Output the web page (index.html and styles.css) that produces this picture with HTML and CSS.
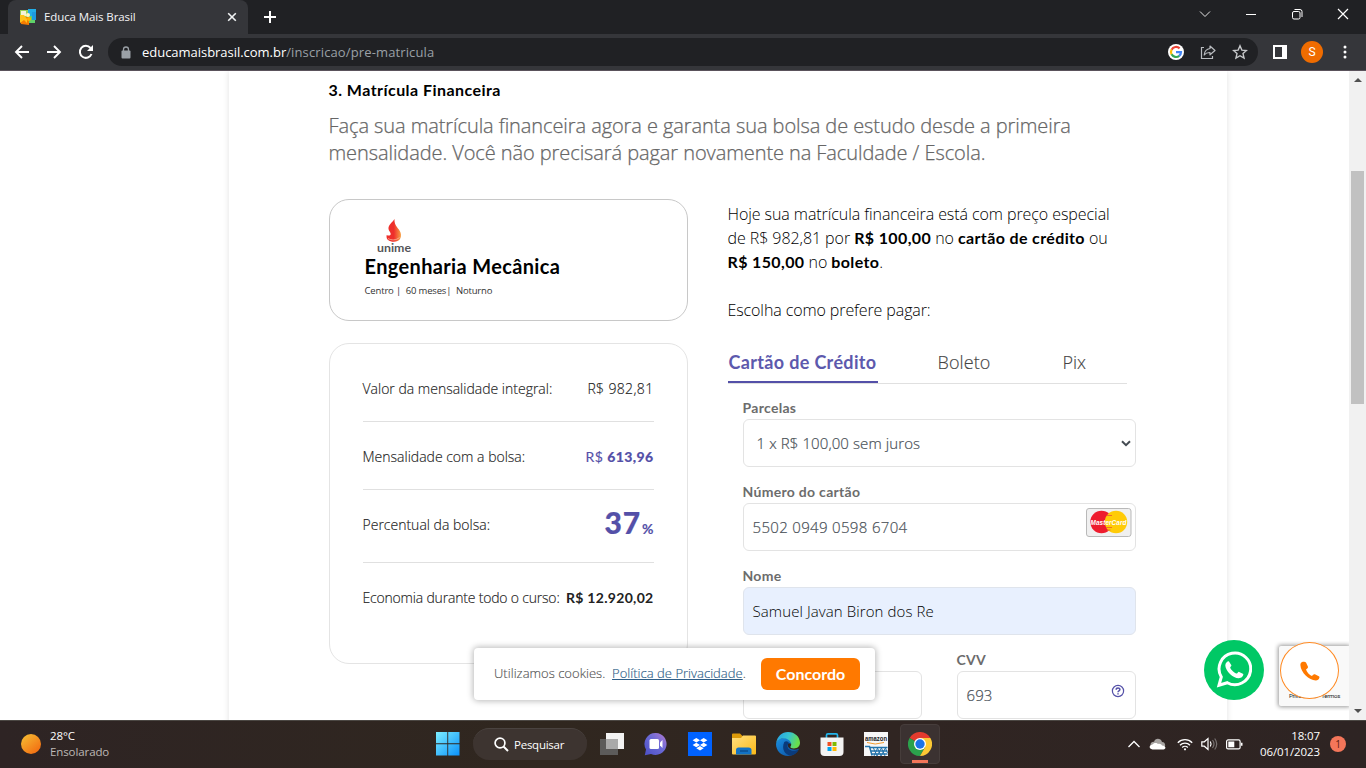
FILE: index.html
```
<!DOCTYPE html>
<html lang="pt-BR">
<head>
<meta charset="utf-8">
<title>Educa Mais Brasil</title>
<link rel="stylesheet" href="styles.css">
</head>
<body>
<header class="tabstrip">
  <div class="tab">
    <svg class="favicon" width="16" height="16" viewBox="0 0 16 16"><path fill="#9bd05a" d="M0 1h8v7H0z"/><path fill="#f4f4d8" d="M1 2h5v5H1z"/><path fill="#22aee8" d="M8 0h8v8H8z"/><path fill="#5ed36a" d="M9 7h6v7H9z"/><path fill="#1d9be0" d="M12 3h4v8h-4z"/><path fill="#f57c00" d="M0 8h9v8l-8-1z"/><path fill="#ffc21a" d="M0 6h4l3 4v4l-3-3-4 3z"/><circle cx="8" cy="6" r="2" fill="#fff6c0"/><circle cx="9" cy="10" r="2" fill="#ffb300"/></svg>
    <span class="tab-title">Educa Mais Brasil</span>
    <svg class="tab-close" width="10" height="10" viewBox="0 0 10 10"><path d="M1.200 1.200l7.600 7.600M8.800 1.200L1.200 8.800" stroke="#f1f3f4" stroke-width="1.600"/></svg>
  </div>
  <svg class="newtab" width="12" height="12" viewBox="0 0 12 12"><path d="M6 0v12M0 6h12" stroke="#fff" stroke-width="2"/></svg>
  <div class="winbtns">
    <svg width="12" height="12" viewBox="0 0 12 12"><path d="M1 3.500l5 5 5-5" fill="none" stroke="#e4e4e4"/></svg>
    <svg width="12" height="12" viewBox="0 0 12 12"><path d="M1 6.500h10" stroke="#fff"/></svg>
    <svg width="12" height="12" viewBox="0 0 12 12" fill="none" stroke="#fff"><rect x="1.500" y="3.500" width="7.500" height="7.500" rx="1.500"/><path d="M3.500 1.500H9a2 2 0 0 1 2 2V9"/></svg>
    <svg width="12" height="12" viewBox="0 0 12 12"><path d="M1 1l10 10M11 1L1 11" stroke="#fff" stroke-width="1.200"/></svg>
  </div>
</header>
<nav class="toolbar">
  <div class="nav-icons">
    <svg width="16" height="16" viewBox="0 0 16 16"><path d="M15 8H2M8 2L2 8l6 6" fill="none" stroke="#fff" stroke-width="1.900"/></svg>
    <svg width="16" height="16" viewBox="0 0 16 16"><path d="M1 8h13M8 2l6 6-6 6" fill="none" stroke="#fff" stroke-width="1.900"/></svg>
    <svg width="16" height="16" viewBox="0 0 16 16"><path d="M13.500 10A6 6 0 1 1 12.500 4" fill="none" stroke="#fff" stroke-width="2"/><path d="M15 1v6H9z" fill="#fff"/></svg>
  </div>
  <div class="omnibox">
    <svg width="10" height="13" viewBox="0 0 10 13"><rect x=".5" y="4.500" width="9" height="8" rx="1" fill="#9aa0a6"/><path d="M2.500 5V3.500a2.500 2.500 0 0 1 5 0V5" fill="none" stroke="#9aa0a6" stroke-width="1.300"/></svg>
    <span class="url"><b>educamaisbrasil.com.br</b>/inscricao/pre-matricula</span>
    <div class="omni-actions">
      <svg width="16" height="16" viewBox="0 0 16 16"><circle cx="8" cy="8" r="8" fill="#fff"/><g fill="none" stroke-width="2.200"><path d="M11.600 4.400A5 5 0 0 0 3.600 5.700" stroke="#ea4335"/><path d="M3.600 5.600a5 5 0 0 0 0 4.900" stroke="#fbbc05"/><path d="M3.600 10.300a5 5 0 0 0 7.700 1.500" stroke="#34a853"/><path d="M11.200 11.900a5 5 0 0 0 1.800-3.700H8" stroke="#4285f4"/></g></svg>
      <svg width="16" height="16" viewBox="0 0 16 16" fill="none" stroke="#b9bcc0" stroke-width="1.200"><path d="M4 3.500H1.500v11h11V12"/><path d="M10 2l5 4.500-5 4.300V8.500C7.500 8.400 5.500 9.300 4.200 11 4.500 7.500 6.500 5 10 4.500z" stroke-linejoin="round"/></svg>
      <svg width="16" height="16" viewBox="0 0 16 16"><path d="M8 1.800l1.850 4.300 4.650.4-3.500 3.100 1.050 4.550L8 11.700l-4.050 2.450L5 9.600 1.500 6.500l4.650-.4z" fill="none" stroke="#c6c8ca" stroke-width="1.400"/></svg>
    </div>
  </div>
  <svg class="panel" width="14" height="14" viewBox="0 0 14 14"><path d="M1 1h12v12H1z" fill="none" stroke="#fff" stroke-width="2"/><path fill="#fff" d="M9 1h4v12H9z"/></svg>
  <span class="avatar">S</span>
  <svg class="dots" width="4" height="14" viewBox="0 0 4 14" fill="#fff"><circle cx="2" cy="2" r="1.500"/><circle cx="2" cy="7" r="1.500"/><circle cx="2" cy="12" r="1.500"/></svg>
</nav>

<div class="viewport">
  <main class="page">
    <h1 class="step">3. Matrícula Financeira</h1>
    <p class="lead">Faça sua matrícula financeira agora e garanta sua bolsa de estudo desde a primeira<br>mensalidade. Você não precisará pagar novamente na Faculdade / Escola.</p>
    <div class="columns">
      <div class="left">
        <section class="course">
          <svg class="unime" width="38" height="36" viewBox="0 0 38 36"><defs><linearGradient id="fl" x1="0" x2="1"><stop offset=".5" stop-color="#ee2f2b"/><stop offset="1" stop-color="#f7a145"/></linearGradient></defs><path d="M18.500 1c-1.500 3-6.500 5.500-6 10 .3 2.200 2.500 3.500 2.200 5.300-.3 1.600-2.700 1.600-4 .6-1 4.500 2.300 6.800 7.300 6.800 5.500 0 8-4 6.600-9C23.500 10.500 18 8.500 18.500 1z" fill="url(#fl)"/><path d="M12 20.500c3.500 2 8 2 11.500-1" fill="none" stroke="#fbb9a0" stroke-width=".8"/><text x="1" y="33.500" class="unime-name" textLength="34" lengthAdjust="spacingAndGlyphs">unime</text></svg>
          <h2 class="course-name">Engenharia Mecânica</h2>
          <p class="course-meta">Centro |&nbsp; 60 meses|&nbsp; Noturno</p>
        </section>
        <section class="values">
          <div class="row"><span>Valor da mensalidade integral:</span><span class="plain">R$ 982,81</span></div>
          <div class="row"><span>Mensalidade com a bolsa:</span><span class="price">R$ <b>613,96</b></span></div>
          <div class="row row-pct"><span>Percentual da bolsa:</span><span class="pct">37<small>%</small></span></div>
          <div class="row"><span class="tight">Economia durante todo o curso:</span><b class="total">R$ 12.920,02</b></div>
        </section>
      </div>
      <div class="right">
        <p class="offer">Hoje sua matrícula financeira está com preço especial<br>de R$ 982,81 por <b>R$ 100,00</b> no <b>cartão de crédito</b> ou<br><b>R$ 150,00</b> no <b>boleto</b>.</p>
        <p class="offer choose">Escolha como prefere pagar:</p>
        <div class="paytabs"><span class="paytab active">Cartão de Crédito</span><span class="paytab boleto">Boleto</span><span class="paytab pix">Pix</span></div>
        <form class="form">
          <div class="field"><label>Parcelas</label><div class="input select"><span>1 x R$ 100,00 sem juros</span><svg width="10" height="7" viewBox="0 0 10 7"><path d="M1 1.200l4 4 4-4" fill="none" stroke="#444b52" stroke-width="2"/></svg></div></div>
          <div class="field"><label>Número do cartão</label><div class="input card"><span class="num">5502 0949 0598 6704</span>
            <svg class="mc" width="46" height="30" viewBox="0 0 46 30"><rect x=".5" y=".5" width="44.500" height="28" rx="2.500" fill="#f0f0f0" stroke="#b9b9b9"/><circle cx="15.500" cy="14" r="11.200" fill="#ee1c2e"/><circle cx="30" cy="14" r="11.200" fill="#ffcb08"/><path d="M21 7.500h5M20 19.500h6M21 22h3.500" stroke="#f0702a" stroke-width="1.200"/><text x="4.500" y="17.200" class="mc-name" textLength="36" lengthAdjust="spacingAndGlyphs">MasterCard</text></svg></div></div>
          <div class="field"><label>Nome</label><div class="input autofill">Samuel Javan Biron dos Re</div></div>
          <div class="pair">
            <div class="field"><label>&nbsp;</label><div class="input"></div></div>
            <div class="field"><label class="cvv">CVV</label><div class="input help"><span>693</span><svg width="14" height="14" viewBox="0 0 14 14" fill="none" stroke="#5450a8"><circle cx="7" cy="7" r="5.600" stroke-width="1.200"/><path d="M5.200 5.700c0-2.200 3.700-2.200 3.700-.1C8.900 7 7 6.800 7 8.200M7 9.200v1.400" stroke-width="1.500"/></svg></div></div>
          </div>
        </form>
      </div>
    </div>
  </main>
  <aside class="scrollbar"><i class="up"></i><i class="thumb"></i><i class="down"></i></aside>
  <div class="cookies"><span class="cookie-text">Utilizamos cookies.&nbsp; <a>Política de Privacidade</a>.</span><button class="agree">Concordo</button></div>
  <div class="recaptcha"><span>Privacidade - Termos</span></div>
  <div class="whats"><svg width="36" height="38" viewBox="0 0 36 38"><path d="M3 34.200l2.300-8.300a15.800 15.800 0 1 1 6 5.800z" fill="none" stroke="#fff" stroke-width="3" stroke-linejoin="miter"/><path d="M12.800 10.200c-1-.3-3.600 1.300-3.500 4.300.2 5.500 8 13 13.500 12.800 2.700-.1 4.700-2.100 4.500-4.200l-4.600-2.400c-1 .5-1.400 1.900-2.300 1.900-1.800-.4-5.600-4-6.200-5.900 0-.9 1.300-1.500 1.200-2.400z" fill="#fff"/></svg></div>
  <div class="phone"><svg width="20" height="20" viewBox="0 0 20 20"><path d="M2.800.8C1 1.200.3 2.500.4 4.300.8 11.500 9 19.200 15.800 19.400c1.800 0 3-.8 3.600-2.600.2-.7 0-1.200-.6-1.500l-3.900-2c-.7-.3-1.300-.1-1.700.4l-1.300 1.300C9.500 13.900 6.900 11.300 6 8.500l1.500-1.300c.5-.4.600-.9.400-1.700L6 1.500C5.300.5 4 .5 2.800.8z" fill="#ff7900"/></svg></div>
</div>

<footer class="taskbar">
  <div class="weather"><i class="sun"></i><div class="weather-text"><div>28°C</div><div class="cond">Ensolarado</div></div></div>
  <div class="apps">
    <svg class="win" width="24" height="24" viewBox="0 0 24 24"><defs><linearGradient id="wg" x1="0" y1="0" x2="1" y2="1"><stop stop-color="#7ceeff"/><stop offset="1" stop-color="#0a91fb"/></linearGradient></defs><path d="M0 0h11.300v11.300H0zM12.200 0H23.500v11.300H12.200zM0 12.200h11.300v11.300H0zM12.200 12.200H23.500v11.300H12.200z" fill="url(#wg)"/></svg>
    <div class="search"><svg width="15" height="15" viewBox="0 0 15 15"><circle cx="6" cy="6" r="4.900" fill="none" stroke="#fff" stroke-width="1.700"/><path d="M9.500 9.500l4.500 4.500" stroke="#fff" stroke-width="1.900"/></svg><span>Pesquisar</span></div>
    <svg width="24" height="24" viewBox="0 0 24 24"><path fill="#f2f2f2" d="M6 1h18v16H6z"/><path fill="#5c5b5a" d="M0 7h18v16H0z"/><path fill="#a9a9a9" d="M6 7h12v10H6z"/></svg>
    <svg width="24" height="24" viewBox="0 0 24 24"><defs><linearGradient id="tg" x1="0" y1="1" x2="1" y2="0"><stop stop-color="#4b4fc4"/><stop offset=".55" stop-color="#6b6ad6"/><stop offset="1" stop-color="#b47bd0"/></linearGradient></defs><path d="M12 1a11 11 0 1 1-5 21L.8 23.300 2 17.500A11 11 0 0 1 12 1z" fill="url(#tg)"/><rect x="5.500" y="7" width="9.500" height="10" rx="1.500" fill="#fff"/><path d="M16 10.500L18.500 8v8L16 13.500z" fill="#fff"/></svg>
    <svg width="24" height="24" viewBox="0 0 24 24"><path fill="#0062ff" d="M0 0h24v24H0z"/><path fill="#fff" d="M8.300 6l3.700 2.300-3.700 2.300-3.700-2.300zM15.700 6l3.700 2.300-3.700 2.300L12 8.300zM8.300 10.700L12 13l-3.700 2.300L4.600 13zM15.700 10.700l3.700 2.300-3.700 2.300L12 13zM12 14l3.700 2.300L12 18.500l-3.700-2.200z"/></svg>
    <svg width="24" height="24" viewBox="0 0 24 24"><defs><linearGradient id="fg" x1="0" y1="0" x2="1" y2="1"><stop stop-color="#ffe082"/><stop offset="1" stop-color="#fbb917"/></linearGradient></defs><path fill="#dc9a09" d="M0 2.500Q0 1.500 1 1.500h7l2.500 2.500H20v4H0z"/><path fill="url(#fg)" d="M0 6h9l2-2.500h12q1 0 1 1V21.500q0 1-1 1H1q-1 0-1-1z"/><path fill="#1272c4" d="M4 22.500V18q0-2.500 2.500-2.500h10q3 0 3 2.500v4.500z"/><path d="M8 19h8" stroke="#0b4f91" stroke-width="1.500"/></svg>
    <svg width="24" height="24" viewBox="0 0 24 24"><defs><linearGradient id="ea" x1="0" y1="0" x2="1" y2=".3"><stop stop-color="#259ee8"/><stop offset=".55" stop-color="#36c4d0"/><stop offset="1" stop-color="#68df4c"/></linearGradient><linearGradient id="eb" x1="0" y1="0" x2="1" y2="1"><stop stop-color="#1a8fe0"/><stop offset="1" stop-color="#0c4d9e"/></linearGradient></defs><path fill="url(#eb)" d="M0 12C1 7 5 6 9 6c4.500 0 6.500 3 6.300 6-2-1.500-3.500-.5-3.600 1 0 4 6 6 11.300 3.800C20.500 22 16 24 12 24 5 24 0 18.500 0 12z"/><path fill="#0a3b7c" d="M8.300 10C5 17 9 23 15 23.600c3-.5 6-2.600 7.800-6.200C17 20.500 10.500 18 11.700 13c.2-.8 1-1.300 1.600-1.500C12 9 9.800 8.700 8.300 10z"/><path fill="url(#ea)" d="M.2 11C1 4.500 6 0 12 0c7 0 12 5 12 10.800 0 3.700-3 5.700-6 5.700-2.500 0-4-.9-3.600-1.700 1.100-1.200 1.100-3.200.1-4.800C11.500 5 3 5 .2 11z"/></svg>
    <svg width="24" height="24" viewBox="0 0 24 24"><path d="M6.500 6V3.200q0-1.400 1.400-1.400h8.200q1.400 0 1.400 1.400V6" fill="none" stroke="#22b5ec" stroke-width="1.700"/><path fill="#f3f3f3" d="M.5 5.500h23V20q0 4-4 4h-15q-4 0-4-4z"/><path fill="#f25022" d="M7.500 10h4v4h-4z"/><path fill="#7fba00" d="M12.500 10h4v4h-4z"/><path fill="#00a4ef" d="M7.500 15h4v4h-4z"/><path fill="#ffb900" d="M12.500 15h4v4h-4z"/></svg>
    <svg width="24" height="24" viewBox="0 0 24 24"><path fill="#f7f7f7" d="M0 0h24v24H0z"/><text x="1" y="9" class="amz" textLength="22" lengthAdjust="spacingAndGlyphs">amazon</text><path d="M3 10.500q8 3 17 0" fill="none" stroke="#f59b2d" stroke-width="1"/><path d="M1 14.500h4.500L8 23.500M6 15.500h17.500M7 19h16.500M8 22h15.500" fill="none" stroke="#2374ab" stroke-width="1.500"/><path d="M9 15l4 9M13 15l4 9M17 15l4 9M21 15l2.500 6M22 15l-5 9M18 15l-5 9M14 15l-4 9" stroke="#2374ab" stroke-width="1"/></svg>
    <div class="active-app"><svg width="24" height="24" viewBox="0 0 24 24"><path fill="#e33b2e" d="M12 12L1.600 6a12 12 0 0 1 20.800 0z"/><path fill="#2ba24c" d="M12 12l5.200 3L12 24A12 12 0 0 1 1.600 6z"/><path fill="#fcc934" d="M12 6h10.400A12 12 0 0 1 12 24l5.200-9z"/><circle cx="12" cy="12" r="6" fill="#fff"/><circle cx="12" cy="12" r="4.700" fill="#1a73e8"/></svg></div>
  </div>
  <div class="tray">
    <svg width="14" height="8" viewBox="0 0 14 8"><path d="M1.500 7L7 1.500 12.500 7" fill="none" stroke="#fff" stroke-width="1.300"/></svg>
    <svg width="17" height="12" viewBox="0 0 17 12"><path d="M2 9C0 5 4 3 5 4c1-4.500 7-4 8 0 3 0 3.500 3 3 4.500z" fill="#a7a4a2"/><path d="M3.500 11.500c-4-.5-3.500-4.500-.3-4.800C5 4 8.500 5 9 6c2-.5 3.500.5 4 1.500 4 0 4.500 3.500 1.500 4z" fill="#fff"/></svg>
    <svg class="wifi" width="16" height="13" viewBox="0 0 16 13" fill="none" stroke="#fff" stroke-width="1.300"><path d="M.8 4.700a10 10 0 0 1 14.400 0M3 7.200a7 7 0 0 1 10 0M5.200 9.500a4 4 0 0 1 5.600 0"/><circle cx="8" cy="11.300" r="1.100" fill="#fff" stroke="none"/></svg>
    <svg width="17" height="14" viewBox="0 0 17 14" fill="none" stroke="#fff" stroke-width="1.200"><path d="M.8 4.800h2.500L7 1.500v11L3.300 9.200H.8z"/><path d="M9.300 4.500q1.500 2.500 0 5"/><path d="M11.500 3q3 4 0 8M13.700 1.500q4 5.500 0 11" stroke="#777170"/></svg>
    <svg width="17" height="11" viewBox="0 0 17 11"><rect x=".6" y=".9" width="13.500" height="9" rx="1.500" fill="none" stroke="#fff" stroke-width="1.200"/><path fill="#fff" d="M2.300 2.600h6v5.600h-6zM15 3.800h1.500v3H15z"/></svg>
    <div class="clock"><div>18:07</div><div>06/01/2023</div></div>
    <span class="notice">1</span>
  </div>
</footer>
</body>
</html>
```
FILE: styles.css
```
* { box-sizing: border-box; }
body { margin: 0; width: 1366px; height: 768px; overflow: hidden; display: flex; flex-direction: column; font-family: "Open Sans", sans-serif; background: #fff; }
h1, h2, p { margin: 0; }
svg { display: block; flex: none; }

.tabstrip { height: 34px; background: #202124; display: flex; align-items: center; padding-left: 8px; }
.tab { width: 240px; height: 34px; background: #35363a; border-radius: 8px 8px 0 0; display: flex; align-items: center; padding: 0 11px 0 12px; }
.tab-title { color: #f3f4f6; font-size: 11.5px; letter-spacing: -.1px; margin-left: 8px; flex: 1; padding-bottom: 1px; }
.newtab { margin-left: 16px; }
.winbtns { margin-left: auto; display: flex; gap: 34px; padding: 0 17px 6px 0; }

.toolbar { height: 37px; background: #35363a; border-bottom: 1px solid #5a525b; display: flex; align-items: center; padding-left: 14px; }
.nav-icons { display: flex; gap: 16px; }
.omnibox { margin-left: 14px; width: 1150px; height: 28px; border-radius: 14px; background: #202124; display: flex; align-items: center; padding: 0 10px 0 13px; }
.url { margin-left: 11px; color: #9aa0a6; font-size: 13px; letter-spacing: .13px; white-space: nowrap; }
.url b { font-weight: 400; color: #fff; letter-spacing: -.03px; }
.omni-actions { margin-left: auto; display: flex; gap: 16px; }
.panel { margin-left: 15px; }
.avatar { margin-left: 14px; width: 22px; height: 22px; border-radius: 50%; background: #ef6c00; color: #fff; font: 12px/22px Roboto, sans-serif; text-align: center; }
.dots { margin-left: 20px; }

.viewport { position: relative; height: 649px; display: flex; justify-content: space-between; overflow: hidden; }
.page { margin-left: 229px; width: 998px; padding: 7px 91px 0 99.5px; box-shadow: 0 0 6px rgba(0,0,0,.12); height: 700px; flex: none; }
.step { font: 700 16px/24px Lato, sans-serif; letter-spacing: .45px; color: #000; }
.lead { margin-top: 10px; font-weight: 300; font-size: 20px; line-height: 27px; letter-spacing: -.08px; color: #666; -webkit-text-stroke: .25px #666; white-space: nowrap; }
.columns { display: flex; gap: 40px; margin-top: 33px; }
.left { width: 359px; flex: none; }
.right { width: 408px; flex: none; padding-top: 3px; }

.course { height: 122px; border: 1px solid #c8c8c8; border-radius: 20px; padding: 18px 34px 0 35px; }
.unime { margin-left: 11px; }
.unime-name { font: 700 12px Lato, sans-serif; fill: #55565a; }
.course-name { font: 700 20px/26px Lato, sans-serif; letter-spacing: .35px; color: #000; margin-top: -1px; }
.course-meta { font-size: 9.5px; line-height: 14px; margin-top: 5px; letter-spacing: -.16px; color: #333; }
.values { height: 321px; margin-top: 22px; border: 1px solid #e4e4e4; border-radius: 20px; padding: 10px 33px 0; }
.row { height: 68px; border-bottom: 1px solid #e0e0e0; display: flex; align-items: center; justify-content: space-between; font-size: 14px; font-weight: 300; color: #222; -webkit-text-stroke: .15px; white-space: nowrap; padding-top: 1px; }
.row:last-child { border-bottom: 0; }
.row-pct { height: 73px; padding: 0 0 4px; }
.tight { letter-spacing: -.19px; }
.plain { letter-spacing: .35px; }
.price { color: #5450a8; font-family: Lato, sans-serif; font-weight: 400; letter-spacing: .4px; }
.price b { font-weight: 900; }
.pct { font: 900 30px/40px Lato, sans-serif; color: #5450a8; letter-spacing: .8px; padding-top: 2px; }
.pct small { font-size: 14px; font-weight: 700; letter-spacing: 0; margin-left: 1px; }
.total { font-family: Lato, sans-serif; font-weight: 700; letter-spacing: .3px; -webkit-text-stroke: 0; }

.offer { font-size: 16px; line-height: 24px; font-weight: 300; letter-spacing: -.07px; color: #000; white-space: nowrap; }
.offer b { font-family: Lato, sans-serif; font-weight: 700; letter-spacing: .37px; }
.choose { margin-top: 24px; letter-spacing: -.1px; }
.paytabs { width: 399px; height: 42px; margin-top: 20px; border-bottom: 1px solid #e0e0e0; display: flex; font-size: 18px; line-height: 41px; font-weight: 300; color: #444; -webkit-text-stroke: .15px; }
.active { width: 150px; height: 41px; line-height: 40px; border-bottom: 2px solid #5450a8; font-family: Lato, sans-serif; font-weight: 700; letter-spacing: .34px; color: #5d59ad; padding-left: 1px; white-space: nowrap; -webkit-text-stroke: 0; }
.boleto { margin-left: 60px; width: 125px; letter-spacing: .1px; }
.form { padding: 15px 0 0 15px; }
.field { height: 84px; }
.field label { display: block; height: 20px; font: 700 14px/18px Lato, sans-serif; letter-spacing: .3px; color: #6c6c6c; }
.input { height: 48px; border: 1px solid #e3e3e3; border-radius: 6px; padding: 0 9px 1px; display: flex; align-items: center; justify-content: space-between; font-size: 15px; font-weight: 300; color: #495057; -webkit-text-stroke: .2px; letter-spacing: .1px; background: #fff; white-space: nowrap; }
.select { padding: 0 4px 0 13px; }
.num { letter-spacing: .33px; }
.card { padding-right: 3px; }
.mc { margin-bottom: 8px; -webkit-text-stroke: 0; }
.mc-name { font: italic 700 8px "Liberation Sans", sans-serif; fill: #fff; }
.autofill { background: #e8f0fe; color: #000; border-color: #dfe4ec; -webkit-text-stroke: 0; }
.pair { display: grid; grid-template-columns: 1fr 1fr; gap: 35px; }
.help { padding-right: 10px; }
.help svg { margin-bottom: 7px; }
.field .cvv { letter-spacing: .2px; }

.scrollbar { width: 17px; background: #f1f1f1; display: flex; flex-direction: column; align-items: center; flex: none; }
.up, .down { border: 4px solid transparent; width: 0; height: 0; }
.up { border-bottom: 4px solid #505050; border-top: 0; margin-top: 7px; }
.down { border-top: 4px solid #505050; border-bottom: 0; margin-top: 305px; }
.thumb { width: 13px; height: 233px; background: #c1c1c1; margin-top: 89px; }

.cookies { position: absolute; left: 474px; top: 577px; width: 401px; height: 52px; background: #fff; border-radius: 4px; box-shadow: 0 0 6px 1px rgba(0,0,0,.28); display: flex; align-items: center; justify-content: space-between; padding: 0 15px 0 20px; }
.cookie-text { font-size: 13px; font-weight: 300; color: #555; -webkit-text-stroke: .15px; white-space: nowrap; padding-bottom: 2px; letter-spacing: .02px; }
.cookie-text a { color: #2f5f88; text-decoration: underline; }
.agree { width: 99px; height: 32px; border: 0; border-radius: 6px; background: #ff7900; color: #fff; font: 700 16px Lato, sans-serif; padding: 0 0 2px; }
.recaptcha { position: absolute; left: 1279px; top: 575px; width: 70px; height: 60px; background: #f9f9f9; border-radius: 2px 0 0 2px; box-shadow: 0 0 4px 1px #999; clip-path: inset(-5px 0 -5px -5px); font: 6px Roboto, sans-serif; color: #222; padding: 46px 0 0 10px; white-space: nowrap; letter-spacing: -.25px; }
.whats { position: absolute; left: 1204px; top: 569px; width: 60px; height: 60px; border-radius: 50%; background: #00c865; display: flex; align-items: center; justify-content: center; }
.phone { position: absolute; left: 1280px; top: 571px; width: 59px; height: 57px; border-radius: 50%; border: 1px solid #ff8a22; background: #fff; display: flex; align-items: center; justify-content: center; }

.taskbar { height: 48px; background: linear-gradient(90deg, #2e2424, #30271f 40%, #302522 65%, #2e2423); border-top: 1px solid #4b4743; display: flex; align-items: center; color: #fff; font-size: 11.5px; }
.weather { display: flex; align-items: center; gap: 9px; padding-left: 21px; line-height: 16px; width: 436px; letter-spacing: -.1px; flex: none; }
.weather-text { padding-bottom: 2px; }
.cond { color: #bdb8b5; }
.sun { width: 20px; height: 20px; border-radius: 50%; background: linear-gradient(140deg, #f6c235, #f2620d); margin-bottom: 2px; }
.apps { display: flex; align-items: center; gap: 20px; flex: none; padding-bottom: 1px; }
.win { margin-right: -7px; }
.search { width: 114px; height: 32px; border-radius: 16px; background: #3d3430; border-top: 1px solid #4a4340; display: flex; align-items: center; padding-left: 21px; gap: 5px; margin-right: -7px; letter-spacing: -.25px; }
.amz { font: 700 8px "Liberation Sans", sans-serif; fill: #222; }
.active-app { width: 40px; height: 40px; margin-left: -8px; border-radius: 4px; border: 1px solid #463d3b; display: flex; align-items: center; justify-content: center; background: linear-gradient(#f4765a, #f4765a) 50% 100% / 16px 3px no-repeat #3b3231; }
.tray { flex: 1; display: flex; align-items: center; justify-content: flex-end; gap: 8px; padding: 0 20px 1px 0; }
.wifi { margin-left: 3px; }
.clock { text-align: right; line-height: 16px; width: 62px; margin-left: 7px; letter-spacing: -.1px; white-space: nowrap; padding-bottom: 1px; }
.notice { width: 16px; height: 16px; border-radius: 50%; background: #f4765a; color: #5b1c10; font-size: 10px; line-height: 16px; text-align: center; margin-left: 2px; }
```
